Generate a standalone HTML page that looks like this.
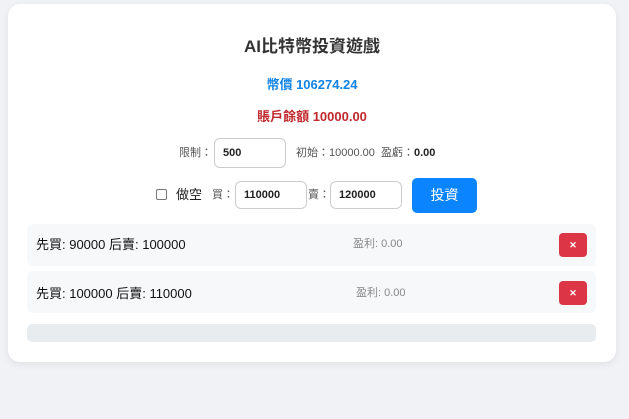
<!DOCTYPE html><html><head><meta charset="utf-8"><style>
body{margin:0;width:629px;height:419px;background:#f0f2f5;font-family:"Liberation Sans","Noto Sans CJK TC",sans-serif;position:relative;overflow:hidden}
.card{position:absolute;left:8px;top:4px;width:608px;height:358px;background:#fff;border-radius:12px;box-shadow:0 2px 8px rgba(0,0,0,.08)}
.a{position:absolute;white-space:nowrap;line-height:1}
.in{position:absolute;border:1px solid #ccc;border-radius:6px;box-sizing:border-box;font-size:11px;font-weight:bold;color:#222;padding-left:8px;display:flex;align-items:center;line-height:1}
.lbl{font-size:11px;color:#555}
.item{position:absolute;left:19px;width:569px;height:42px;background:#f7f8fa;border-radius:6px}
.del{position:absolute;left:532px;top:9px;width:28px;height:24px;background:#dc3545;border-radius:4px;color:#fff;font-size:9px;font-weight:bold;text-align:center;line-height:24px}
</style></head><body><div class="card">
<div class="a" style="left:0;width:608px;text-align:center;top:34px;font-size:17px;font-weight:bold;color:#333">AI比特幣投資遊戲</div>
<div class="a" style="left:0;width:608px;text-align:center;top:74px;font-size:13px;font-weight:bold;color:#1283e6">幣價 106274.24</div>
<div class="a" style="left:0;width:608px;text-align:center;top:106px;font-size:13px;font-weight:bold;color:#c0282d">賬戶餘額 10000.00</div>
<div class="a lbl" style="left:171px;top:144px">限制：</div>
<div class="in" style="left:206px;top:134px;width:72px;height:30px">500</div>
<div class="a lbl" style="left:288px;top:144px">初始：10000.00 &nbsp;盈虧：<b style="color:#222">0.00</b></div>
<div class="a" style="left:148px;top:185px;width:9px;height:9px;border:1px solid #777;border-radius:2px"></div>
<div class="a" style="left:168px;top:184px;font-size:13px;color:#222">做空</div>
<div class="a lbl" style="left:204px;top:186px">買：</div>
<div class="in" style="left:227px;top:177px;width:72px;height:28px">110000</div>
<div class="a lbl" style="left:300px;top:186px">賣：</div>
<div class="in" style="left:322px;top:177px;width:72px;height:28px">120000</div>
<div class="a" style="left:404px;top:174px;width:65px;height:35px;background:#0a84ff;border-radius:5px;color:#fff;font-size:14px;text-align:center;line-height:35px">投資</div>
<div class="item" style="top:220px"><div class="a" style="left:9px;top:14px;font-size:13px;color:#111">先買: 90000 后賣: 100000</div><div class="a" style="left:326px;top:15px;font-size:11px;color:#888">盈利: 0.00</div><div class="del">✕</div></div>
<div class="item" style="top:267px"><div class="a" style="left:9px;top:16px;font-size:13px;color:#111">先買: 100000 后賣: 110000</div><div class="a" style="left:329px;top:17px;font-size:11px;color:#888">盈利: 0.00</div><div class="del" style="top:10px">✕</div></div>
<div class="a" style="left:19px;top:320px;width:569px;height:18px;background:#e9ecef;border-radius:5px"></div>
</div></body></html>
